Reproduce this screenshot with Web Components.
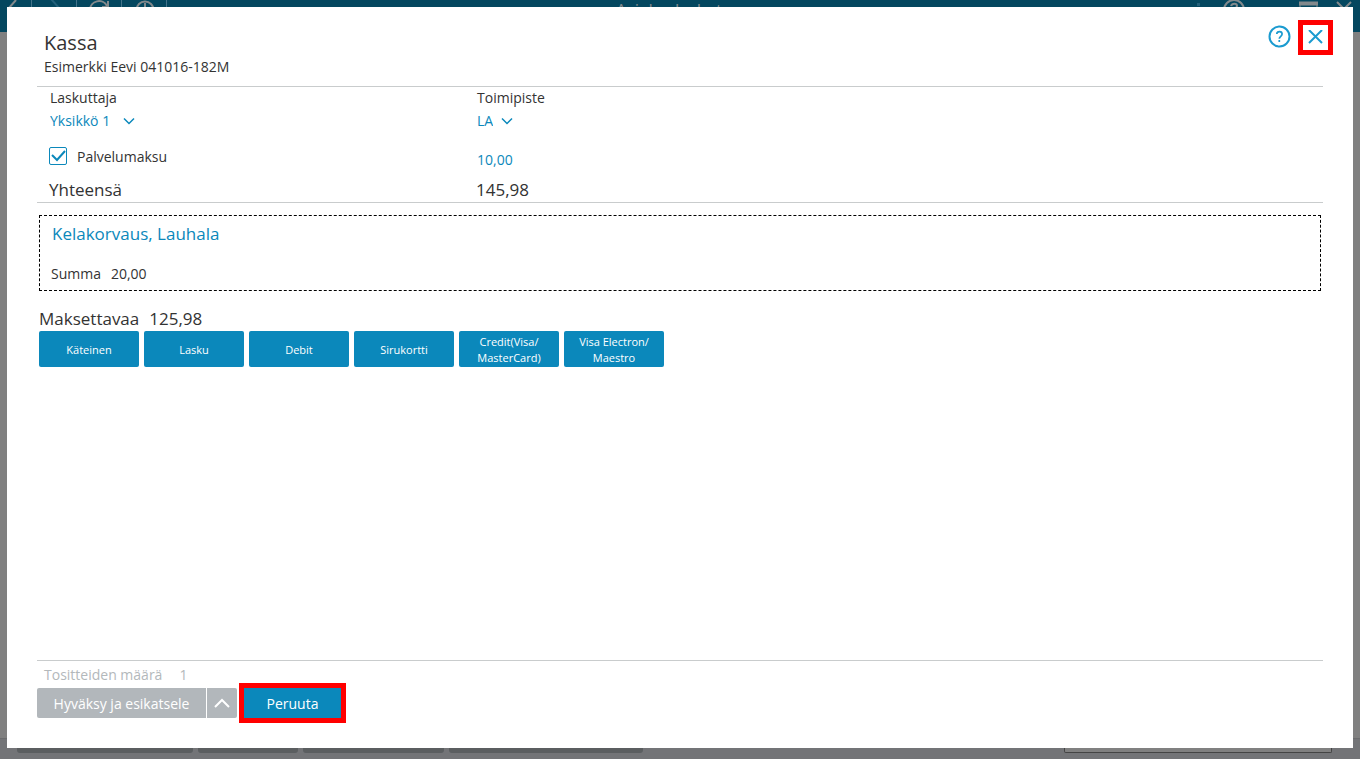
<!DOCTYPE html>
<html lang="fi">
<head>
<meta charset="utf-8">
<meta name="viewport" content="width=device-width, initial-scale=1">
<title>Kassa</title>
<style>
html,body{margin:0;height:100%}
body{font:14px/20px "Open Sans","Noto Sans",sans-serif;color:#333;background:#808080;overflow:hidden;
--blue:#0b88bb;--rule:#c9cccd}
</style>
</head>
<body>
<app-backdrop></app-backdrop>
<cash-dialog>
  <dialog-header slot="header" heading="Kassa" subject="Esimerkki Eevi 041016-182M"></dialog-header>
  <billing-form></billing-form>
  <reimbursement-box heading="Kelakorvaus, Lauhala" label="Summa" amount="20,00"></reimbursement-box>
  <payment-panel label="Maksettavaa" amount="125,98">
    <pay-button>Käteinen</pay-button>
    <pay-button>Lasku</pay-button>
    <pay-button>Debit</pay-button>
    <pay-button>Sirukortti</pay-button>
    <pay-button>Credit(Visa/<br>MasterCard)</pay-button>
    <pay-button>Visa Electron/<br>Maestro</pay-button>
  </payment-panel>
  <dialog-footer slot="footer"></dialog-footer>
</cash-dialog>
<script>
const RESET = `*{box-sizing:border-box}button,input,select{font:inherit;color:inherit;margin:0;padding:0;border:0;background:none;border-radius:0}
h1,h2,h3,p{margin:0;font-weight:400}svg{display:block;fill:none;stroke:currentColor}`;
function define(name, render) {
  customElements.define(name, class extends HTMLElement {
    constructor() { super(); this.attachShadow({ mode: "open" }); }
    connectedCallback() {
      const r = render(this);
      this.shadowRoot.innerHTML = `<style>${RESET}${r.css}</style>${r.html}`;
    }
  });
}

define("app-backdrop", () => ({
  css: `:host{display:flex;flex-direction:column;height:100vh;color:#82898c}
  header{display:flex;justify-content:space-between;height:32px;background:#04475f}
  nav{display:flex}
  nav button,.win button{display:flex;justify-content:center;width:45px;height:32px}
  nav button{border-right:1px solid #43738a}
  nav button:first-child{width:32px}
  nav button:nth-child(2){color:#23607a}
  h1{font-size:17px;line-height:20px;margin-right:18px}
  .win{display:flex}
  .win .dots{width:20px}.win .help{width:50px}
  .win .max{width:68px;justify-content:flex-end;padding-right:9px}
  .win .close{width:33px;justify-content:flex-start;padding-left:9px}
  main{flex:1;background:#808080}
  footer{display:flex;gap:5px;height:21px;padding:0 28px 6px 17px;background:#737477;border-top:1px solid #6b6c6e}
  footer button{height:14px;background:#5b5e60;border-radius:0 0 3px 3px}
  footer input{margin-left:auto;width:268px;height:14px;background:#808080;border:1px solid #444;border-top:0;border-radius:0 0 2px 2px}`,
  html: `<header><nav aria-label="Työkalut">
    <button aria-label="Takaisin"><svg width="26" height="18" stroke-width="2"><path d="M13 0 5 9l8 9"/></svg></button>
    <button aria-label="Eteenpäin"><svg width="20" height="18" stroke-width="2"><path d="m7-1 9 10-9 10"/></svg></button>
    <button aria-label="Päivitä"><svg width="22" height="20" stroke-width="2"><path d="M2 10a9 9 0 0 1 17-4M20 1v6h-6"/></svg></button>
    <button aria-label="Historia"><svg width="20" height="20" stroke-width="2"><circle cx="11" cy="10" r="8.5"/><path d="M11 3v8"/></svg></button>
  </nav><h1>Asiakaslaskut</h1>
  <div class="win"><button class="dots" aria-label="Lisää"><svg width="4" height="8"><rect y="3" width="3" height="3" style="fill:#23607a;stroke:none"/></svg></button>
    <button class="help" aria-label="Ohje"><svg width="24" height="24" stroke-width="2"><circle cx="12" cy="10" r="10"/><path d="M9 6c1-3 6-3 6 0 0 2-3 2-3 5"/></svg></button>
    <button class="max" aria-label="Suurenna"><svg width="19" height="14"><path d="M1 14V3h17v11" stroke-width="1"/><path d="M0 3.500h19" stroke-width="4"/></svg></button>
    <button class="close" aria-label="Sulje"><svg width="16" height="18" stroke-width="2"><path d="m1 2 14 14M15 2 1 16"/></svg></button></div></header>
  <main></main>
  <footer><button style="width:176px" aria-label="Toiminto 1"></button><button style="width:100px" aria-label="Toiminto 2"></button><button style="width:141px" aria-label="Toiminto 3"></button><button style="width:194px" aria-label="Toiminto 4"></button><input aria-label="Haku"></footer>`
}));

define("cash-dialog", () => ({
  css: `:host{position:fixed;inset:7px 7px 11px;display:flex;flex-direction:column;padding:0 30px 30px;background:#fff}
  main{flex:1;min-height:0}`,
  html: `<slot name="header"></slot><main><slot></slot></main><slot name="footer"></slot>`
}));

define("dialog-header", el => ({
  css: `:host{display:flex;justify-content:space-between;align-items:flex-start;padding:22px 0 9px 7px;border-bottom:1px solid var(--rule)}
  h1{font-size:20px;line-height:28px}
  p{line-height:20px}
  .tools{display:flex;align-items:center;gap:11px;margin:-4px -5px 0 0;color:#1b9bd0}
  .tools button{width:25px;height:25px;display:grid;place-items:center}
  .close{outline:5px solid #f00}`,
  html: `<div><h1>${el.getAttribute("heading")}</h1><p>${el.getAttribute("subject")}</p></div>
  <div class="tools"><button aria-label="Ohje"><svg width="25" height="25" stroke-width="2"><circle cx="12.500" cy="11.500" r="10"/><path stroke-width="1.700" d="M9.800 9c.2-3.200 5.300-3.200 5.300.1 0 2.200-2.800 2.200-2.800 4.700M12.300 15v2"/></svg></button>
  <button class="close" aria-label="Sulje"><svg width="15" height="15" stroke-width="2"><path d="m1 0 13 13M14 0 1 13"/></svg></button></div>`
}));

define("link-select", el => ({
  css: `:host{display:inline-grid;color:var(--blue);align-items:center}
  label{display:block;line-height:22px;color:#333}
  .box{display:grid;justify-content:start;align-items:center;height:24px}
  select,svg{grid-area:1/1}
  select{appearance:none;field-sizing:content;padding-right:var(--room,23px);line-height:20px}
  svg{justify-self:end;pointer-events:none}`,
  html: `<label for="s">${el.getAttribute("label")}</label><div class="box"><select id="s"><option>${el.getAttribute("value")}</option></select>
  <svg width="12" height="8" stroke-width="1.500"><path d="m1 1.500 5 5 5-5"/></svg></div>`
}));

define("billing-form", () => ({
  css: `:host{display:grid;grid-template-columns:427px 1fr;padding:0 13px;border-bottom:1px solid var(--rule)}
  .fee{display:flex;align-items:center;gap:10px;height:46px}
  .fee label{line-height:20px;padding-top:2px}
  input[type=checkbox]{appearance:none;width:18px;height:18px;margin-left:-1px;border:1px solid var(--blue);border-radius:2px}
  .check{display:grid}.check>*{grid-area:1/1}
  .check svg{color:var(--blue);pointer-events:none;margin-left:-1px}
  .amount{height:46px;padding-top:6px;color:var(--blue);width:80px}
  .total{font-size:17px;line-height:22px;margin-left:-1px;height:23px}`,
  html: `<link-select label="Laskuttaja" value="Yksikkö 1" style="--room:25px"></link-select>
  <link-select label="Toimipiste" value="LA" style="--room:20px"></link-select>
  <div class="fee"><span class="check"><input type="checkbox" id="fee" checked><svg width="18" height="18" stroke-width="2"><path d="m3 8 5 5 8-9"/></svg></span><label for="fee">Palvelumaksu</label></div>
  <input class="amount" aria-label="Palvelumaksu" value="10,00">
  <div class="total">Yhteensä</div><div class="total">145,98</div>`
}));

define("reimbursement-box", el => ({
  css: `:host{display:block;margin:12px 2px 0;padding:6px 11px 6px;border:1px dashed #000}
  h2{font-size:17px;line-height:24px;padding-left:1px;color:var(--blue)}
  p{display:flex;gap:10px;margin-top:18px;line-height:20px}`,
  html: `<h2>${el.getAttribute("heading")}</h2><p><span>${el.getAttribute("label")}</span><span>${el.getAttribute("amount")}</span></p>`
}));

define("payment-panel", el => ({
  css: `:host{display:block;margin:16px 2px 0}
  p{display:flex;gap:10px;font-size:17px;line-height:24px}
  .row{display:flex;flex-wrap:wrap;gap:5px}`,
  html: `<p><span>${el.getAttribute("label")}</span><span>${el.getAttribute("amount")}</span></p><div class="row"><slot></slot></div>`
}));

define("pay-button", () => ({
  css: `:host{display:block;width:100px}
  button{display:block;width:100%;height:36px;padding-top:2px;font-size:11px;line-height:16px;text-align:center;color:#fff;background:var(--blue);border-radius:2px}`,
  html: `<button type="button"><slot></slot></button>`
}));

define("dialog-footer", () => ({
  css: `:host{display:block;border-top:1px solid var(--rule)}
  p{display:flex;gap:17px;padding:4px 7px 3px;line-height:20px;color:#b3b8bb}
  .row{display:flex;gap:7px}
  .split{display:flex;gap:1px}
  button{height:30px;padding-top:2px;color:#fff;background:#b2b7bb}
  .accept{width:169px;border-radius:2px 0 0 2px}
  .more{display:grid;place-items:center;width:30px;padding:0;border-radius:0 2px 2px 0}
  .cancel{width:97px;background:var(--blue);outline:5px solid #f00}`,
  html: `<p><span>Tositteiden määrä</span><span>1</span></p>
  <div class="row"><div class="split"><button class="accept" disabled>Hyväksy ja esikatsele</button>
  <button class="more" disabled aria-label="Lisää vaihtoehtoja"><svg width="16" height="10" stroke-width="2"><path d="m1 9 7-7 7 7"/></svg></button></div>
  <button class="cancel">Peruuta</button></div>`
}));
</script>
</body>
</html>
